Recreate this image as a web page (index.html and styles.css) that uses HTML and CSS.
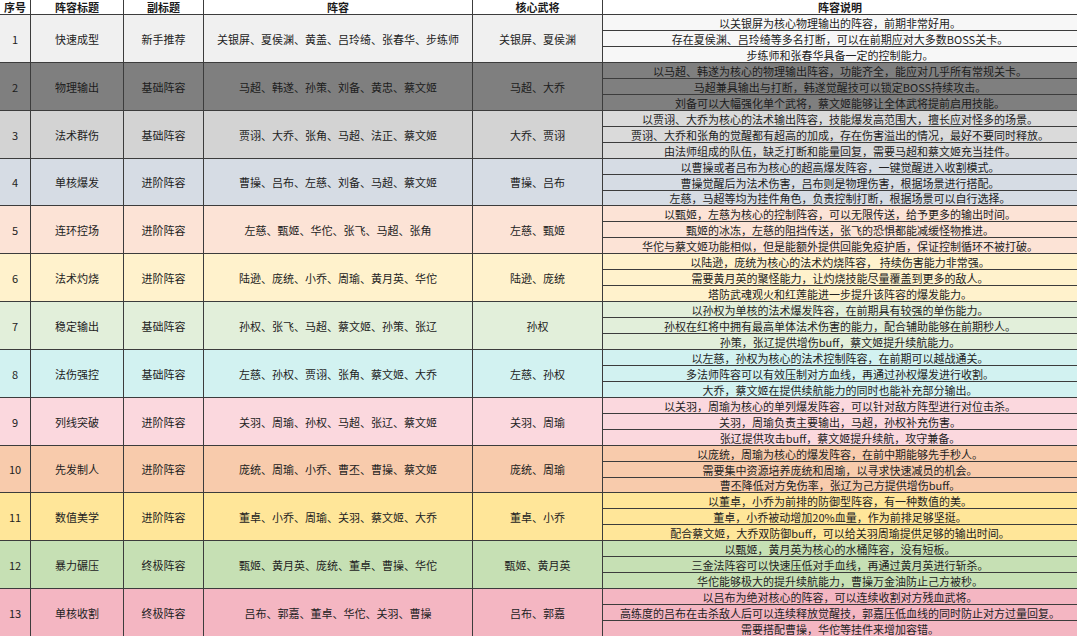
FILE: index.html
```html
<!DOCTYPE html>
<html lang="zh-CN">
<head>
<meta charset="utf-8">
<title>阵容推荐</title>
<link rel="stylesheet" href="styles.css">
</head>
<body>
<div class="sheet">
  <div class="row head">
    <div class="cell">序号</div>
    <div class="cell">阵容标题</div>
    <div class="cell">副标题</div>
    <div class="cell">阵容</div>
    <div class="cell">核心武将</div>
    <div class="cell hdesc">阵容说明</div>
  </div>

  <div class="row r1">
    <div class="cell main">1</div>
    <div class="cell main">快速成型</div>
    <div class="cell main">新手推荐</div>
    <div class="cell main">关银屏、夏侯渊、黄盖、吕玲绮、张春华、步练师</div>
    <div class="cell main">关银屏、夏侯渊</div>
    <div class="cell desc">以关银屏为核心物理输出的阵容，前期非常好用。</div>
    <div class="cell desc">存在夏侯渊、吕玲绮等多名打断，可以在前期应对大多数BOSS关卡。</div>
    <div class="cell desc">步练师和张春华具备一定的控制能力。</div>
  </div>

  <div class="row r2">
    <div class="cell main">2</div>
    <div class="cell main">物理输出</div>
    <div class="cell main">基础阵容</div>
    <div class="cell main">马超、韩遂、孙策、刘备、黄忠、蔡文姬</div>
    <div class="cell main">马超、大乔</div>
    <div class="cell desc">以马超、韩遂为核心的物理输出阵容，功能齐全，能应对几乎所有常规关卡。</div>
    <div class="cell desc">马超兼具输出与打断，韩遂觉醒技可以锁定BOSS持续攻击。</div>
    <div class="cell desc">刘备可以大幅强化单个武将，蔡文姬能够让全体武将提前启用技能。</div>
  </div>

  <div class="row r3">
    <div class="cell main">3</div>
    <div class="cell main">法术群伤</div>
    <div class="cell main">基础阵容</div>
    <div class="cell main">贾诩、大乔、张角、马超、法正、蔡文姬</div>
    <div class="cell main">大乔、贾诩</div>
    <div class="cell desc">以贾诩、大乔为核心的法术输出阵容，技能爆发高范围大，擅长应对怪多的场景。</div>
    <div class="cell desc">贾诩、大乔和张角的觉醒都有超高的加成，存在伤害溢出的情况，最好不要同时释放。</div>
    <div class="cell desc">由法师组成的队伍，缺乏打断和能量回复，需要马超和蔡文姬充当挂件。</div>
  </div>

  <div class="row r4 short">
    <div class="cell main">4</div>
    <div class="cell main">单核爆发</div>
    <div class="cell main">进阶阵容</div>
    <div class="cell main">曹操、吕布、左慈、刘备、马超、蔡文姬</div>
    <div class="cell main">曹操、吕布</div>
    <div class="cell desc">以曹操或者吕布为核心的超高爆发阵容，一键觉醒进入收割模式。</div>
    <div class="cell desc">曹操觉醒后为法术伤害，吕布则是物理伤害，根据场景进行搭配。</div>
    <div class="cell desc">左慈，马超等均为挂件角色，负责控制打断，根据场景可以自行选择。</div>
  </div>

  <div class="row r5">
    <div class="cell main">5</div>
    <div class="cell main">连环控场</div>
    <div class="cell main">进阶阵容</div>
    <div class="cell main">左慈、甄姬、华佗、张飞、马超、张角</div>
    <div class="cell main">左慈、甄姬</div>
    <div class="cell desc">以甄姬，左慈为核心的控制阵容，可以无限传送，给予更多的输出时间。</div>
    <div class="cell desc">甄姬的冰冻，左慈的阻挡传送，张飞的恐惧都能减缓怪物推进。</div>
    <div class="cell desc">华佗与蔡文姬功能相似，但是能额外提供回能免疫护盾，保证控制循环不被打破。</div>
  </div>

  <div class="row r6">
    <div class="cell main">6</div>
    <div class="cell main">法术灼烧</div>
    <div class="cell main">进阶阵容</div>
    <div class="cell main">陆逊、庞统、小乔、周瑜、黄月英、华佗</div>
    <div class="cell main">陆逊、庞统</div>
    <div class="cell desc">以陆逊，庞统为核心的法术灼烧阵容， 持续伤害能力非常强。</div>
    <div class="cell desc">需要黄月英的聚怪能力，让灼烧技能尽量覆盖到更多的敌人。</div>
    <div class="cell desc">塔防武魂观火和红莲能进一步提升该阵容的爆发能力。</div>
  </div>

  <div class="row r7">
    <div class="cell main">7</div>
    <div class="cell main">稳定输出</div>
    <div class="cell main">基础阵容</div>
    <div class="cell main">孙权、张飞、马超、蔡文姬、孙策、张辽</div>
    <div class="cell main">孙权</div>
    <div class="cell desc">以孙权为单核的法术爆发阵容，在前期具有较强的单伤能力。</div>
    <div class="cell desc">孙权在红将中拥有最高单体法术伤害的能力，配合辅助能够在前期秒人。</div>
    <div class="cell desc">孙策，张辽提供增伤buff，蔡文姬提升续航能力。</div>
  </div>

  <div class="row r8">
    <div class="cell main">8</div>
    <div class="cell main">法伤强控</div>
    <div class="cell main">基础阵容</div>
    <div class="cell main">左慈、孙权、贾诩、张角、蔡文姬、大乔</div>
    <div class="cell main">左慈、孙权</div>
    <div class="cell desc">以左慈，孙权为核心的法术控制阵容，在前期可以越战通关。</div>
    <div class="cell desc">多法师阵容可以有效压制对方血线，再通过孙权爆发进行收割。</div>
    <div class="cell desc">大乔，蔡文姬在提供续航能力的同时也能补充部分输出。</div>
  </div>

  <div class="row r9">
    <div class="cell main">9</div>
    <div class="cell main">列线突破</div>
    <div class="cell main">进阶阵容</div>
    <div class="cell main">关羽、周瑜、孙权、马超、张辽、蔡文姬</div>
    <div class="cell main">关羽、周瑜</div>
    <div class="cell desc">以关羽，周瑜为核心的单列爆发阵容，可以针对敌方阵型进行对位击杀。</div>
    <div class="cell desc">关羽，周瑜负责主要输出，马超，孙权补充伤害。</div>
    <div class="cell desc">张辽提供攻击buff，蔡文姬提升续航，攻守兼备。</div>
  </div>

  <div class="row r10 short">
    <div class="cell main">10</div>
    <div class="cell main">先发制人</div>
    <div class="cell main">进阶阵容</div>
    <div class="cell main">庞统、周瑜、小乔、曹丕、曹操、蔡文姬</div>
    <div class="cell main">庞统、周瑜</div>
    <div class="cell desc">以庞统，周瑜为核心的爆发阵容，在前中期能够先手秒人。</div>
    <div class="cell desc">需要集中资源培养庞统和周瑜，以寻求快速减员的机会。</div>
    <div class="cell desc">曹丕降低对方免伤率，张辽为己方提供增伤buff。</div>
  </div>

  <div class="row r11">
    <div class="cell main">11</div>
    <div class="cell main">数值美学</div>
    <div class="cell main">进阶阵容</div>
    <div class="cell main">董卓、小乔、周瑜、关羽、蔡文姬、大乔</div>
    <div class="cell main">董卓、小乔</div>
    <div class="cell desc">以董卓，小乔为前排的防御型阵容，有一种数值的美。</div>
    <div class="cell desc">董卓，小乔被动增加20%血量，作为前排足够坚挺。</div>
    <div class="cell desc">配合蔡文姬，大乔双防御buff，可以给关羽周瑜提供足够的输出时间。</div>
  </div>

  <div class="row r12">
    <div class="cell main">12</div>
    <div class="cell main">暴力碾压</div>
    <div class="cell main">终极阵容</div>
    <div class="cell main">甄姬、黄月英、庞统、董卓、曹操、华佗</div>
    <div class="cell main">甄姬、黄月英</div>
    <div class="cell desc">以甄姬，黄月英为核心的水桶阵容，没有短板。</div>
    <div class="cell desc">三金法阵容可以快速压低对手血线，再通过黄月英进行斩杀。</div>
    <div class="cell desc">华佗能够极大的提升续航能力，曹操万金油防止己方被秒。</div>
  </div>

  <div class="row r13">
    <div class="cell main">13</div>
    <div class="cell main">单核收割</div>
    <div class="cell main">终极阵容</div>
    <div class="cell main">吕布、郭嘉、董卓、华佗、关羽、曹操</div>
    <div class="cell main">吕布、郭嘉</div>
    <div class="cell desc">以吕布为绝对核心的阵容，可以连续收割对方残血武将。</div>
    <div class="cell desc">高练度的吕布在击杀敌人后可以连续释放觉醒技，郭嘉压低血线的同时防止对方过量回复。</div>
    <div class="cell desc">需要搭配曹操，华佗等挂件来增加容错。</div>
  </div>
</div>
</body>
</html>
```
FILE: styles.css
```css
html, body {
  margin: 0;
  padding: 0;
  background: #ffffff;
}

body {
  width: 1077px;
  height: 636px;
  overflow: hidden;
  font-family: "Noto Sans CJK SC", "Noto Sans", sans-serif;
  font-size: 11px;
  color: #222222;
}

.sheet {
  display: grid;
  grid-template-columns: 30px 92px 79px 268px 129px 474px;
  grid-auto-rows: auto;
  gap: 1px;
  background: #3c3c3c;
  width: 1077px;
}

.row {
  display: contents;
}

.cell {
  display: flex;
  align-items: center;
  justify-content: center;
  text-align: center;
  white-space: nowrap;
  overflow: hidden;
  line-height: 14px;
}

.main {
  grid-row: span 3;
}

.desc {
  grid-column: 6;
  height: 15px;
}

.short .desc:last-child {
  height: 14px;
}

.head .cell {
  height: 14px;
  background: #ffffff;
  font-weight: 700;
  color: #1a1a1a;
}

.r1 .main { background: #f0f0f0; }
.r1 .desc { background: #f7f7f7; }
.r2 .cell { background: #7f7f7f; color: #1c1c1c; }
.r3 .main { background: #d3d3d3; }
.r3 .desc { background: #dadada; }
.r4 .cell { background: #d6dce4; }
.r5 .cell { background: #fce3d6; }
.r6 .cell { background: #fff2cc; }
.r7 .cell { background: #e2efda; }
.r8 .cell { background: #d2f2f1; }
.r9 .cell { background: #fbd8de; }
.r10 .cell { background: #f8cbac; }
.r11 .cell { background: #ffe699; }
.r12 .cell { background: #c6e0b4; }
.r13 .cell { background: #f4b6c2; }
```
